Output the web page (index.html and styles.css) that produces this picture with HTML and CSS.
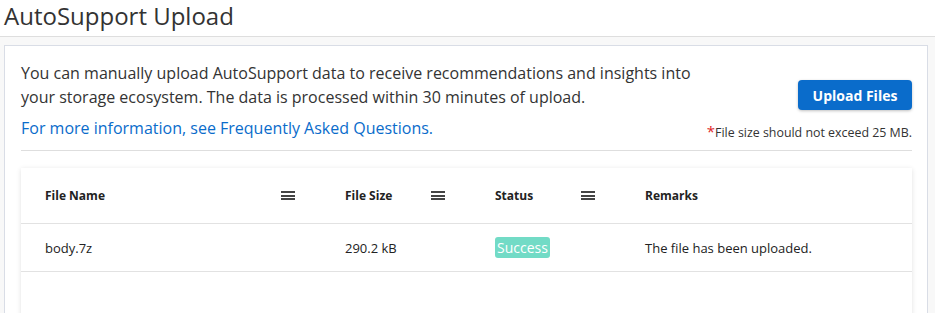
FILE: index.html
```html
<!DOCTYPE html>
<html lang="en">
<head>
  <meta charset="UTF-8">
  <title>AutoSupport Upload</title>
  <link rel="stylesheet" href="styles.css">
</head>
<body>

  <header class="page-head">
    <h1>AutoSupport Upload</h1>
  </header>

  <main class="page-body">
    <section class="card">
      <div class="intro">
        <div class="intro-text">
          <p>You can manually upload AutoSupport data to receive recommendations and insights into<br>your storage ecosystem. The data is processed within 30 minutes of upload.</p>
          <a class="faq" href="#">For more information, see Frequently Asked Questions.</a>
        </div>
        <div class="intro-side">
          <button class="btn">Upload Files</button>
          <div class="note"><span class="req">*</span>File size should not exceed 25 MB.</div>
        </div>
      </div>

      <div class="table">
        <div class="row head">
          <div class="cell">File Name <span class="menu"></span></div>
          <div class="cell">File Size <span class="menu"></span></div>
          <div class="cell">Status <span class="menu"></span></div>
          <div class="cell">Remarks</div>
        </div>
        <div class="row">
          <div class="cell">body.7z</div>
          <div class="cell">290.2 kB</div>
          <div class="cell"><span class="badge">Success</span></div>
          <div class="cell">The file has been uploaded.</div>
        </div>
        <div class="empty"></div>
      </div>
    </section>
  </main>

</body>
</html>
```

FILE: styles.css
```css
/* reset */
* { margin:0; padding:0; box-sizing:border-box }
html, body { height:100%; }
body {
  background:#f8f8f8;
  font-family:"Open Sans", sans-serif;
  color:#333;
  overflow:hidden;
}

/* page title */
.page-head {
  height:37px;
  background:#fff;
  border-bottom:1px solid #dedede;
  padding-left:4px;
}
.page-head h1 {
  font-size:24px;
  font-weight:400;
  line-height:32px;
  color:#333;
}

/* main area */
.page-body { padding:8px 7px 0 4px; }

.card {
  background:#fff;
  border:1px solid #d9dde6;
  padding:15px 15px 0 16px;
  min-height:300px;
}

/* intro block */
.intro {
  display:flex;
  justify-content:space-between;
  border-bottom:1px solid #dedede;
  padding-bottom:9px;
}
.intro-text p {
  font-size:16px;
  line-height:24px;
  color:#333;
}
.faq {
  display:block;
  margin-top:7px;
  font-size:16px;
  line-height:24px;
  color:#0a6ccb;
  text-decoration:none;
}
.intro-side {
  display:flex;
  flex-direction:column;
  align-items:flex-end;
  padding-top:19px;
}
.btn {
  width:114px; height:30px;
  background:#0a6ccb;
  color:#fff;
  border:none; border-radius:4px;
  font-family:inherit;
  font-size:14px; font-weight:700;
  box-shadow:0 1px 3px rgba(0,0,0,.25);
}
.note {
  margin-top:13px;
  font-size:12.4px;
  line-height:16px;
  color:#333;
}
.req { color:#e0262a; font-size:15px; }

/* table */
.table {
  margin-top:17px;
  background:#fff;
  box-shadow:0 1px 5px rgba(0,0,0,.12);
  min-height:200px;
}
.row {
  display:grid;
  grid-template-columns:300px 150px 150px 1fr;
  border-bottom:1px solid #e2e2e2;
  height:48px;
  align-items:center;
  font-size:13px;
  color:#222;
}
.row.head {
  height:56px;
  font-size:12px;
  font-weight:700;
}
.cell {
  display:flex;
  justify-content:space-between;
  align-items:center;
  padding:0 26px 0 24px;
}

/* column menu icon */
.menu {
  width:14px; height:9px;
  border-top:2px solid #444;
  border-bottom:2px solid #444;
  position:relative;
}
.menu::after {
  content:"";
  position:absolute; left:0; right:0; top:1.5px;
  height:2px; background:#444;
}

.badge {
  display:inline-block;
  background:#72dbc6;
  color:#fff;
  font-size:14px;
  line-height:21px;
  padding:0 2px;
  border-radius:3px;
}
```
